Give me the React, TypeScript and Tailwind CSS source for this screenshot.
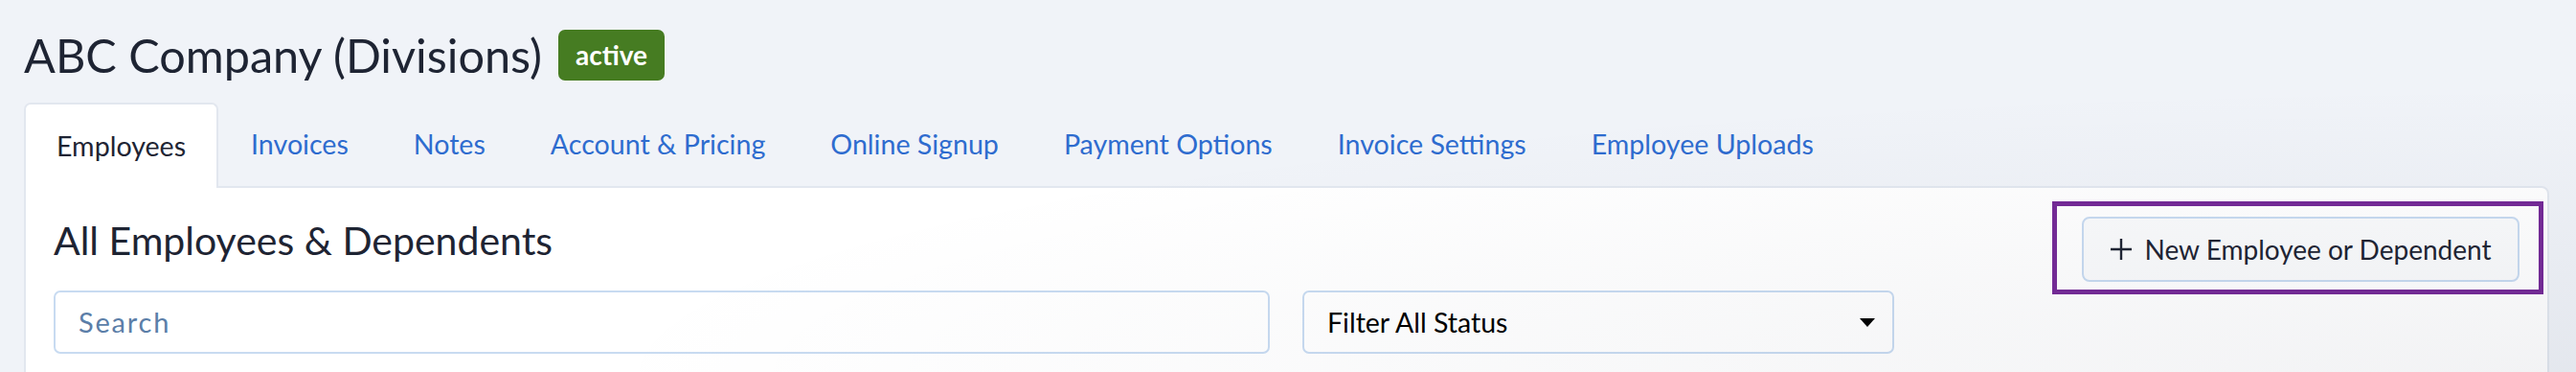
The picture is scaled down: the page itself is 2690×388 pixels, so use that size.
import React from "react";

const tabs = [
  "Employees",
  "Invoices",
  "Notes",
  "Account & Pricing",
  "Online Signup",
  "Payment Options",
  "Invoice Settings",
  "Employee Uploads",
];

const App = () => {
  return (
    <div className="relative min-h-[388px] w-full overflow-hidden bg-[#f0f3f8] font-['Lato','Noto_Sans',sans-serif] text-[#1e2433]">
      <div className="pl-[25px] pr-[28px] pt-[28px]">
        <div className="flex h-[58px] items-center">
          <h1 className="text-[48.6px] leading-[58px] font-normal">ABC Company (Divisions)</h1>
          <span className="ml-[17px] flex h-[53px] w-[111px] items-center justify-center rounded-[7px] bg-[#467c22] text-[28px] font-bold text-white">
            active
          </span>
        </div>

        <nav className="mt-[21px] flex">
          {tabs.map((t, i) =>
            i === 0 ? (
              <div
                key={t}
                className="relative z-10 -mb-[2px] flex h-[89px] items-center rounded-t-[7px] border-2 border-b-0 border-[#e2e7ef] bg-white px-[32px] text-[28.6px]"
              >
                {t}
              </div>
            ) : (
              <a
                key={t}
                href="#"
                className="flex h-[87px] items-center px-[34px] text-[28.6px] text-[#2e6ccf]"
              >
                {t}
              </a>
            )
          )}
        </nav>

        <div className="h-[200px] rounded-tr-[8px] border-2 border-[#e2e7ef] bg-white px-[29px] pt-[30px]">
          <div className="flex items-start justify-between">
            <h2 className="mt-[1px] text-[41px] leading-[48px] font-normal">All Employees &amp; Dependents</h2>
            <div className="relative">
              <div className="pointer-events-none absolute -top-[16px] -right-[25px] -bottom-[13px] -left-[31px] border-[5px] border-[#752a97]" />
              <button className="flex h-[68px] w-[457px] items-center justify-center gap-[12px] rounded-[8px] border-2 border-[#c8dbf1] bg-[#fafbfc] text-[28px] text-[#1e2433]">
                <svg width="24" height="24" viewBox="0 0 24 24" className="shrink-0">
                  <path d="M12 1v22M1 12h22" stroke="#1e2433" strokeWidth="2.4" fill="none" />
                </svg>
                New Employee or Dependent
              </button>
            </div>
          </div>

          <div className="mt-[9px] flex gap-[34px]">
            <div className="flex h-[66px] w-[1270px] items-center rounded-[7px] border-2 border-[#c8dbf1] bg-white px-[24px] text-[29px] tracking-[1.8px] text-[#5b7ea8]">
              Search
            </div>
            <div className="flex h-[66px] w-[618px] items-center justify-between rounded-[7px] border-2 border-[#c8dbf1] bg-white pl-[24px] pr-[18px] text-[28.5px] text-black">
              <span>Filter All Status</span>
              <svg width="16" height="9" viewBox="0 0 16 9">
                <path d="M0 0h16L8 9z" fill="#000" />
              </svg>
            </div>
          </div>
        </div>
      </div>
      <div className="pointer-events-none absolute inset-0 bg-[radial-gradient(ellipse_at_bottom_right,rgba(30,40,70,0.06),transparent_55%)]" />
    </div>
  );
};

export default App;
